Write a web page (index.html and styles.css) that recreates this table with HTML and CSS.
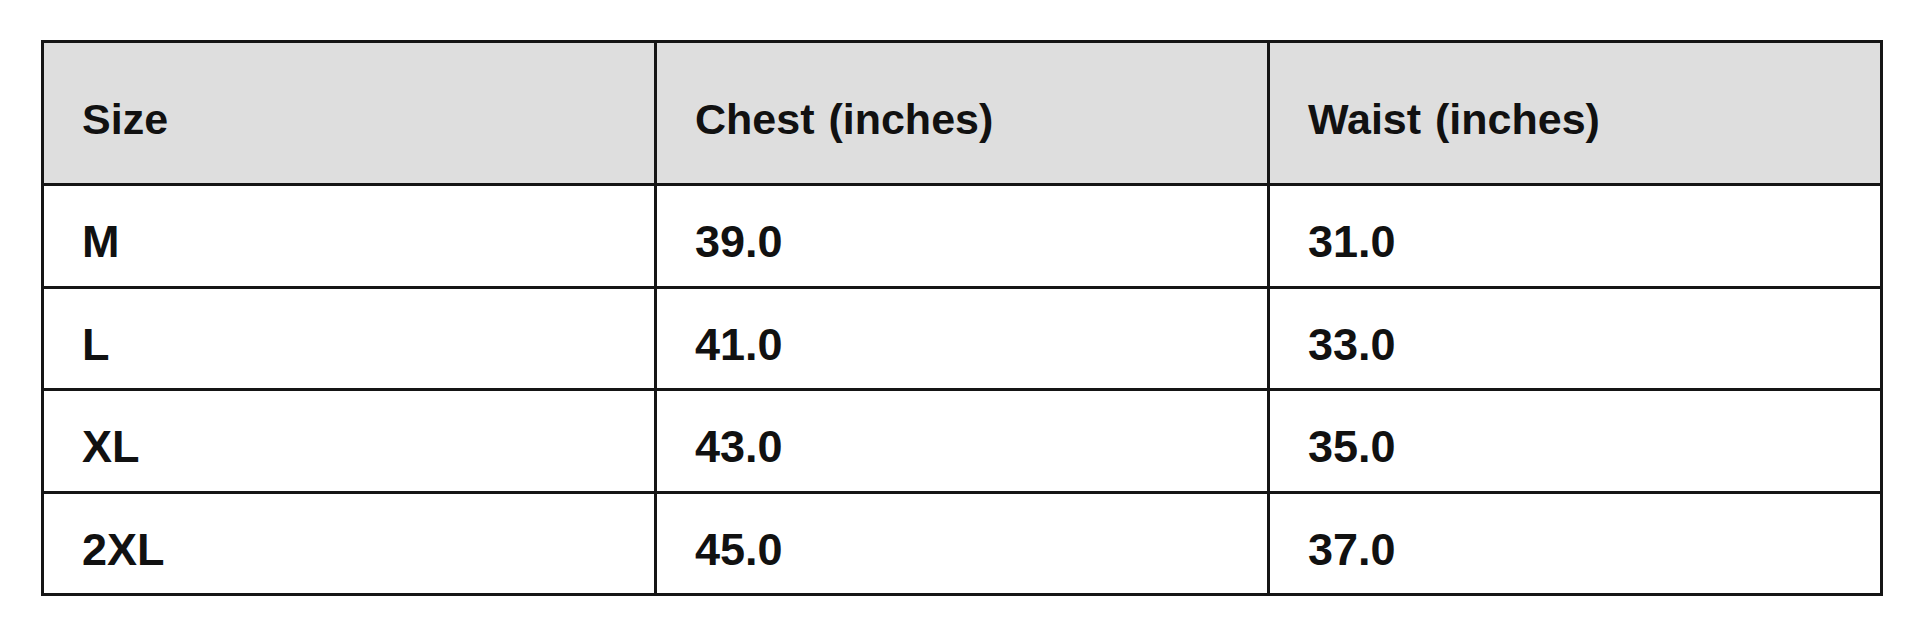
FILE: index.html
```html
<!DOCTYPE html>
<html>
<head>
<meta charset="utf-8">
<link rel="stylesheet" href="styles.css">
</head>
<body>
<table class="size-table">
  <thead>
    <tr>
      <th>Size</th>
      <th>Chest (inches)</th>
      <th>Waist (inches)</th>
    </tr>
  </thead>
  <tbody>
    <tr><td>M</td><td>39.0</td><td>31.0</td></tr>
    <tr><td>L</td><td>41.0</td><td>33.0</td></tr>
    <tr><td>XL</td><td>43.0</td><td>35.0</td></tr>
    <tr><td>2XL</td><td>45.0</td><td>37.0</td></tr>
  </tbody>
</table>
</body>
</html>
```

FILE: styles.css
```css
html, body {
  background: #ffffff;
}
body {
  margin: 40px 37px 0 41px;
  font-family: "Liberation Sans", Arial, sans-serif;
  color: #111111;
}
.size-table {
  width: 1842px;
  border-collapse: collapse;
  table-layout: fixed;
}
.size-table th,
.size-table td {
  border: 3px solid #151515;
  text-align: left;
  font-weight: bold;
  vertical-align: top;
}
.size-table th {
  background: #dedede;
  font-size: 43px;
  line-height: 48px;
  word-spacing: 2px;
  padding: 52px 38px 40px 38px;
}
.size-table td {
  font-size: 45px;
  line-height: 50px;
  padding: 31px 38px 18.5px 38px;
}
```
